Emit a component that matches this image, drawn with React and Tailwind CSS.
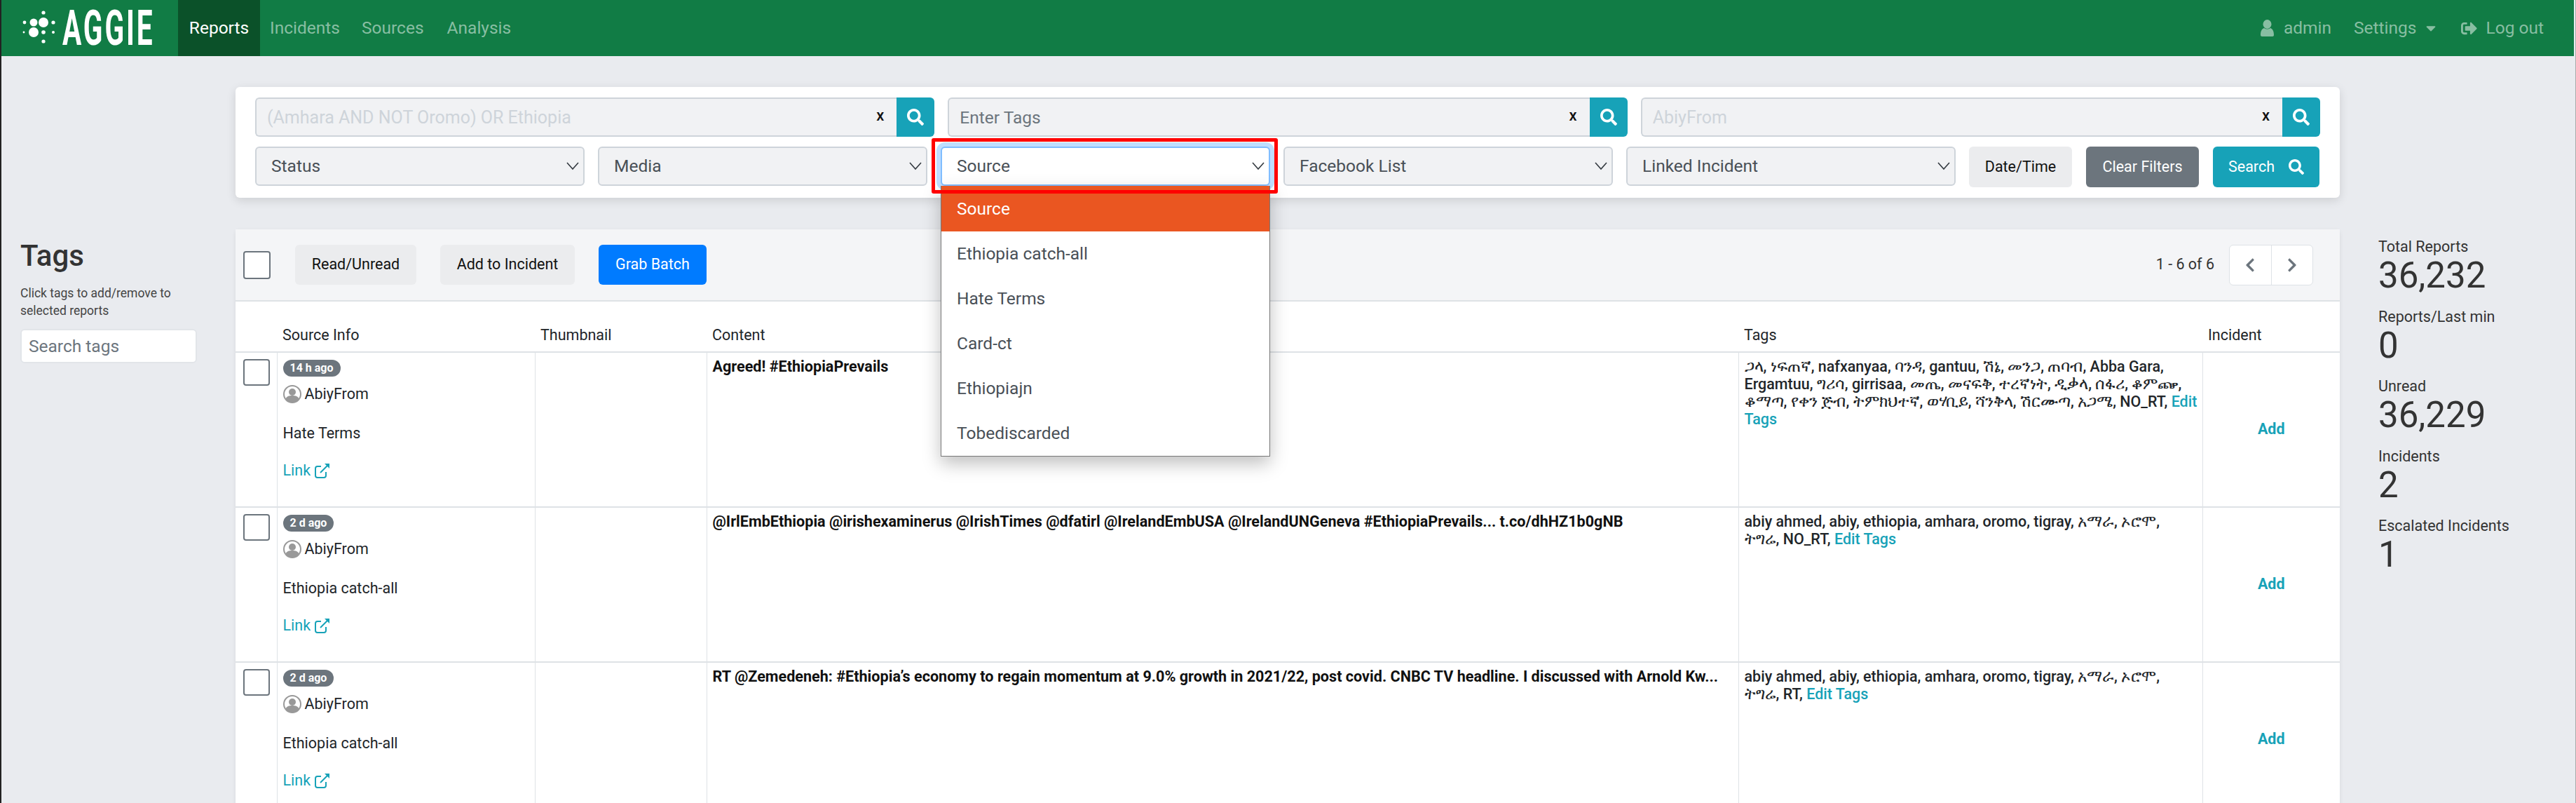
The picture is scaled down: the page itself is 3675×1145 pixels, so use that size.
import { FaSearch, FaSignOutAlt, FaChevronLeft, FaChevronRight, FaCaretDown } from "react-icons/fa";

const TAGS_HATE = "ጋላ, ነፍጠኛ, nafxanyaa, ባንዳ, gantuu, ሽኔ, መንጋ, ጠባብ, Abba Gara, Ergamtuu, ግሪሳ, girrisaa, መጤ, መናፍቅ, ተረኛነት, ዲቃላ, ሰፋሪ, ቆምጬ, ቆማጣ, የቀን ጅብ, ትምክህተኛ, ወሃቢይ, ሻንቅላ, ሽርሙጣ, አጋሜ, NO_RT, ";

const reports = [
  { age: "14 h ago", source: "Hate Terms", content: "Agreed! #EthiopiaPrevails", tags: TAGS_HATE },
  {
    age: "2 d ago",
    source: "Ethiopia catch-all",
    content: "@IrlEmbEthiopia @irishexaminerus @IrishTimes @dfatirl @IrelandEmbUSA @IrelandUNGeneva #EthiopiaPrevails... t.co/dhHZ1b0gNB",
    tags: "abiy ahmed, abiy, ethiopia, amhara, oromo, tigray, አማራ, ኦሮሞ, ትግሬ,\u00a0NO_RT, ",
  },
  {
    age: "2 d ago",
    source: "Ethiopia catch-all",
    content: "RT @Zemedeneh: #Ethiopia’s economy to regain momentum at 9.0% growth in 2021/22, post covid. CNBC TV headline. I discussed with Arnold Kw...",
    tags: "abiy ahmed, abiy, ethiopia, amhara, oromo, tigray, አማራ, ኦሮሞ, ትግሬ,\u00a0RT, ",
  },
];

const stats = [
  ["Total Reports", "36,232"],
  ["Reports/Last min", "0"],
  ["Unread", "36,229"],
  ["Incidents", "2"],
  ["Escalated Incidents", "1"],
];

const sourceOptions = ["Ethiopia catch-all", "Hate Terms", "Card-ct", "Ethiopiajn", "Tobediscarded"];

// the ethiopic fallback font draws small, so bump those runs a bit
function TagText({ text }) {
  const parts = text.split(/([\u1200-\u137F]+(?: [\u1200-\u137F]+)*)/);
  return parts.map((part, i) =>
    i % 2 === 1 ? (
      <span key={i} className="text-[23px]">
        {part}
      </span>
    ) : (
      part
    )
  );
}

function Chevron() {
  return (
    <svg width="18" height="12" viewBox="0 0 18 12" fill="none" stroke="#343a40" strokeWidth="1.6" className="absolute right-[6px] top-[20px]">
      <path d="M1 1l8 9 8-9" />
    </svg>
  );
}

function SelectBox({ label }) {
  return (
    <div className="relative h-[56px] w-[470px] rounded-[6px] border-2 border-[#ced4da] bg-[#f1f2f4] pl-[21px] text-[24.500px] leading-[52px] text-[#495057]">
      <span>{label}</span>
      <Chevron />
    </div>
  );
}

function SearchInput({ placeholder, dark }) {
  return (
    <div className="flex h-[56px] flex-1">
      <div className="relative flex-1 rounded-l-[6px] border-2 border-r-0 border-[#ced4da] bg-[#f1f2f4]">
        <input
          placeholder={placeholder}
          className={
            dark
              ? "h-full w-full bg-transparent pl-[15px] text-[24.500px] outline-none placeholder:text-[#6c757d]"
              : "h-full w-full bg-transparent pl-[15px] text-[25px] outline-none placeholder:text-[#ced4da]"
          }
        />
        <span className="absolute right-[18px] top-[9px] text-[22px] font-medium leading-[30px] text-[#111]">x</span>
      </div>
      <div className="flex w-[54px] items-center justify-center rounded-r-[6px] bg-[#17a2b8] text-white">
        <FaSearch size={24} />
      </div>
    </div>
  );
}

function Logo() {
  return (
    <div className="flex h-full w-[252px] items-center pl-[30px]">
      <svg width="50" height="50" viewBox="0 0 50 50" fill="#fff" className="shrink-0">
        <circle cx="16" cy="17" r="5.500" />
        <circle cx="30" cy="17" r="7" />
        <circle cx="16" cy="31" r="7" />
        <circle cx="30" cy="31" r="2.800" />
        <circle cx="30" cy="3" r="2.600" />
        <circle cx="30" cy="44" r="2.600" />
        <circle cx="3" cy="17" r="2.400" />
        <circle cx="2" cy="31" r="1.400" />
        <circle cx="44" cy="17" r="2.600" />
        <circle cx="44" cy="31" r="2" />
      </svg>
      <span className="ml-[7px] inline-block origin-left scale-x-[0.58] text-[70px] font-bold leading-none tracking-[5px] text-white">AGGIE</span>
    </div>
  );
}

function UserIcon() {
  return (
    <svg width="19" height="24" viewBox="0 0 19 24" fill="#88bea2">
      <ellipse cx="9.500" cy="6.500" rx="6" ry="6.500" />
      <path d="M0 22c0-6 2-9 5-10 3 2 6 2 9 0 3 1 5 4 5 10 0 1-1 2-2 2H2c-1 0-2-1-2-2z" />
    </svg>
  );
}

function Avatar() {
  return (
    <svg width="26" height="26" viewBox="0 0 26 26" className="shrink-0">
      <circle cx="13" cy="13" r="12" fill="#fff" stroke="#999" strokeWidth="2" />
      <circle cx="13" cy="10" r="5" fill="#999" />
      <path d="M3.500 20c1-4 5-5 9.500-5s8.500 1 9.500 5a12 12 0 0 1-19 0z" fill="#999" />
    </svg>
  );
}

function LinkIcon() {
  return (
    <svg width="22" height="22" viewBox="0 0 22 22" fill="none" stroke="#17a2b8" strokeWidth="2" className="ml-[6px]">
      <path d="M16 13v5a3 3 0 0 1-3 3H4a3 3 0 0 1-3-3V8a3 3 0 0 1 3-3h5" />
      <path d="M8 14L19 3" />
      <path d="M14 1h7v7z" fill="#17a2b8" stroke="none" />
    </svg>
  );
}

function Checkbox() {
  return <div className="h-[38px] w-[38px] rounded-[4px] border-2 border-[#6c757d] bg-white" />;
}

function ReportRow({ report }) {
  return (
    <tr>
      <td className="h-[221px] border-b-2 border-[#dee2e6] pl-[11px] pt-[9px] align-top">
        <Checkbox />
      </td>
      <td className="border-b-2 border-l border-[#dee2e6] pl-[8px] pt-[10px] align-top">
        <span className="inline-block h-[24px] rounded-[12px] bg-[#6c757d] px-[10px] text-[16px] font-bold leading-[24px] text-white">{report.age}</span>
        <div className="mt-[12px] flex h-[26px] items-center text-[21.500px] text-[#212529]">
          <Avatar />
          <span className="ml-[5px]">AbiyFrom</span>
        </div>
        <div className="mt-[30px] text-[21.500px] leading-[25px] text-[#212529]">{report.source}</div>
        <div className="mt-[28px] flex items-center text-[21.500px] leading-[25px] text-[#17a2b8]">
          Link
          <LinkIcon />
        </div>
      </td>
      <td className="border-b-2 border-l border-[#dee2e6]" />
      <td className="border-b-2 border-l border-[#dee2e6] pl-[8px] pt-[7px] align-top text-[21.600px] font-bold leading-[25px] text-[#111]">{report.content}</td>
      <td className="border-b-2 border-l border-[#dee2e6] pl-[8px] pr-[3px] pt-[7px] align-top text-[21.500px] font-medium leading-[25px] text-[#212529]">
        <TagText text={report.tags} />
        <span className="text-[#17a2b8]">Edit Tags</span>
      </td>
      <td className="border-b-2 border-l border-[#dee2e6] text-center align-middle text-[21.500px] font-bold text-[#17a2b8]">Add</td>
    </tr>
  );
}

export default function App() {
  return (
    <div className="h-[1145px] w-[3675px] overflow-hidden border-l-2 border-r border-[#222] border-r-[#aaa] bg-[#e9ebef] font-[Roboto,'Noto_Sans',sans-serif]">
      {/* navbar */}
      <nav className="mr-[2px] flex h-[80px] items-center bg-[#117c45] text-[24.500px] text-[#88bea2]">
        <Logo />
        <a className="flex h-full w-[117px] items-center justify-center bg-[#0b5129] text-white">Reports</a>
        <a className="ml-[14px]">Incidents</a>
        <a className="ml-[31px]">Sources</a>
        <a className="ml-[33px]">Analysis</a>
        <div className="ml-auto flex items-center pr-[43px]">
          <UserIcon />
          <span className="ml-[14px]">admin</span>
          <span className="ml-[32px]">Settings</span>
          <FaCaretDown size={22} className="ml-[9px]" />
          <FaSignOutAlt size={23} className="ml-[32px]" />
          <span className="ml-[13px]">Log out</span>
        </div>
      </nav>

      <div className="flex">
        {/* tags sidebar */}
        <aside className="w-[334px] shrink-0 pl-[27px] pt-[260px]">
          <h3 className="text-[42px] font-medium leading-[50px] text-[#333]">Tags</h3>
          <p className="mt-[16px] text-[17.500px] leading-[25px] text-[#444]">
            Click tags to add/remove to
            <br />
            selected reports
          </p>
          <input placeholder="Search tags" className="mt-[13px] h-[49px] w-[252px] rounded-[6px] border-2 border-[#e2e5e9] bg-white pl-[10px] text-[24.500px] outline-none placeholder:text-[#6c757d]" />
        </aside>

        {/* main column */}
        <main className="w-[3002px] shrink-0 pt-[44px]">
          <section className="relative z-10 h-[158px] rounded-[6px] bg-white px-[28px] pt-[15px] shadow-[0_4px_14px_rgba(0,0,0,0.12)]">
            <div className="flex gap-[19px]">
              <SearchInput placeholder="(Amhara AND NOT Oromo) OR Ethiopia" />
              <SearchInput placeholder="Enter Tags" dark />
              <SearchInput placeholder="AbiyFrom" />
            </div>
            <div className="mt-[14px] flex gap-[19px]">
              <SelectBox label="Status" />
              <SelectBox label="Media" />
              <div className="relative h-[56px] w-[470px] rounded-[6px] border-2 border-[#80bdff] bg-white pl-[21px] text-[24.500px] leading-[52px] text-[#495057] shadow-[0_0_0_6px_rgba(0,123,255,0.25)]">
                <span>Source</span>
                <Chevron />
                <div className="absolute left-[-2px] right-[-2px] top-[54px] border border-t-0 border-[#777] bg-white shadow-[0_10px_24px_rgba(0,0,0,0.25)]">
                  <div className="h-[65px] bg-[#ea5621] pl-[22px] leading-[65px] text-white">Source</div>
                  {sourceOptions.map((opt) => (
                    <div key={opt} className="h-[64px] pl-[22px] leading-[64px] text-[#495057]">
                      {opt}
                    </div>
                  ))}
                </div>
                {/* red annotation box */}
                <div className="absolute bottom-[-13px] left-[-15px] right-[-13px] top-[-14px] rounded-[3px] border-[5px] border-[#f00]" />
              </div>
              <SelectBox label="Facebook List" />
              <SelectBox label="Linked Incident" />
              <button className="h-[58px] w-[147px] rounded-[6px] bg-[#ebecee] text-[21.500px] text-[#111]">Date/Time</button>
              <button className="ml-px h-[58px] w-[161px] rounded-[6px] bg-[#6c757d] text-[21.500px] text-white">Clear Filters</button>
              <button className="ml-px flex h-[58px] w-[152px] items-center justify-center gap-[20px] rounded-[6px] bg-[#17a2b8] text-[21.500px] text-white">
                Search
                <FaSearch size={22} />
              </button>
            </div>
          </section>

          <section className="mt-[45px] rounded-t-[6px] bg-white shadow-[0_2px_6px_rgba(0,0,0,0.08)]">
            <div className="flex h-[103px] items-center border-b-2 border-[#dee2e6] bg-[#f4f5f7] pl-[11px] pr-[38px]">
              <div className="h-[40px] w-[39px] rounded-[4px] border-2 border-[#6c757d] bg-white" />
              <button className="ml-[35px] h-[57px] w-[173px] rounded-[6px] bg-[#ebecee] text-[21.500px] text-[#111]">Read/Unread</button>
              <button className="ml-[34px] h-[57px] w-[192px] rounded-[6px] bg-[#ebecee] text-[21.500px] text-[#111]">Add to Incident</button>
              <button className="ml-[34px] h-[57px] w-[154px] rounded-[6px] bg-[#007bff] text-[21.500px] text-white">Grab Batch</button>
              <span className="ml-auto text-[21.500px] text-[#333]">1 - 6 of 6</span>
              <div className="ml-[21px] flex h-[58px] w-[120px] rounded-[6px] border border-[#dee2e6] bg-white text-[#6c757d]">
                <div className="flex flex-1 items-center justify-center border-r border-[#dee2e6]">
                  <FaChevronLeft size={22} />
                </div>
                <div className="flex flex-1 items-center justify-center">
                  <FaChevronRight size={22} />
                </div>
              </div>
            </div>
            <table className="w-full table-fixed">
              <colgroup>
                <col className="w-[59px]" />
                <col className="w-[368px]" />
                <col className="w-[245px]" />
                <col className="w-[1472px]" />
                <col className="w-[662px]" />
                <col />
              </colgroup>
              <thead>
                <tr className="h-[72px] text-left align-bottom text-[21.500px] font-normal text-[#212529]">
                  <th className="border-b-2 border-[#dee2e6]" />
                  <th className="border-b-2 border-[#dee2e6] pb-[7px] pl-[8px] font-normal">Source Info</th>
                  <th className="border-b-2 border-[#dee2e6] pb-[7px] pl-[8px] font-normal">Thumbnail</th>
                  <th className="border-b-2 border-[#dee2e6] pb-[7px] pl-[8px] font-normal">Content</th>
                  <th className="border-b-2 border-[#dee2e6] pb-[7px] pl-[8px] font-normal">Tags</th>
                  <th className="border-b-2 border-[#dee2e6] pb-[7px] pl-[8px] font-normal">Incident</th>
                </tr>
              </thead>
              <tbody>
                {reports.map((report, i) => (
                  <ReportRow key={i} report={report} />
                ))}
              </tbody>
            </table>
          </section>
        </main>

        {/* stats */}
        <aside className="flex-1 pl-[55px] pt-[259px] text-[#333]">
          {stats.map(([label, value]) => (
            <div key={label} className="h-[99.500px]">
              <div className="text-[21.500px] leading-[25px]">{label}</div>
              <div className="text-[51px] leading-[58px]">{value}</div>
            </div>
          ))}
        </aside>
      </div>
    </div>
  );
}
